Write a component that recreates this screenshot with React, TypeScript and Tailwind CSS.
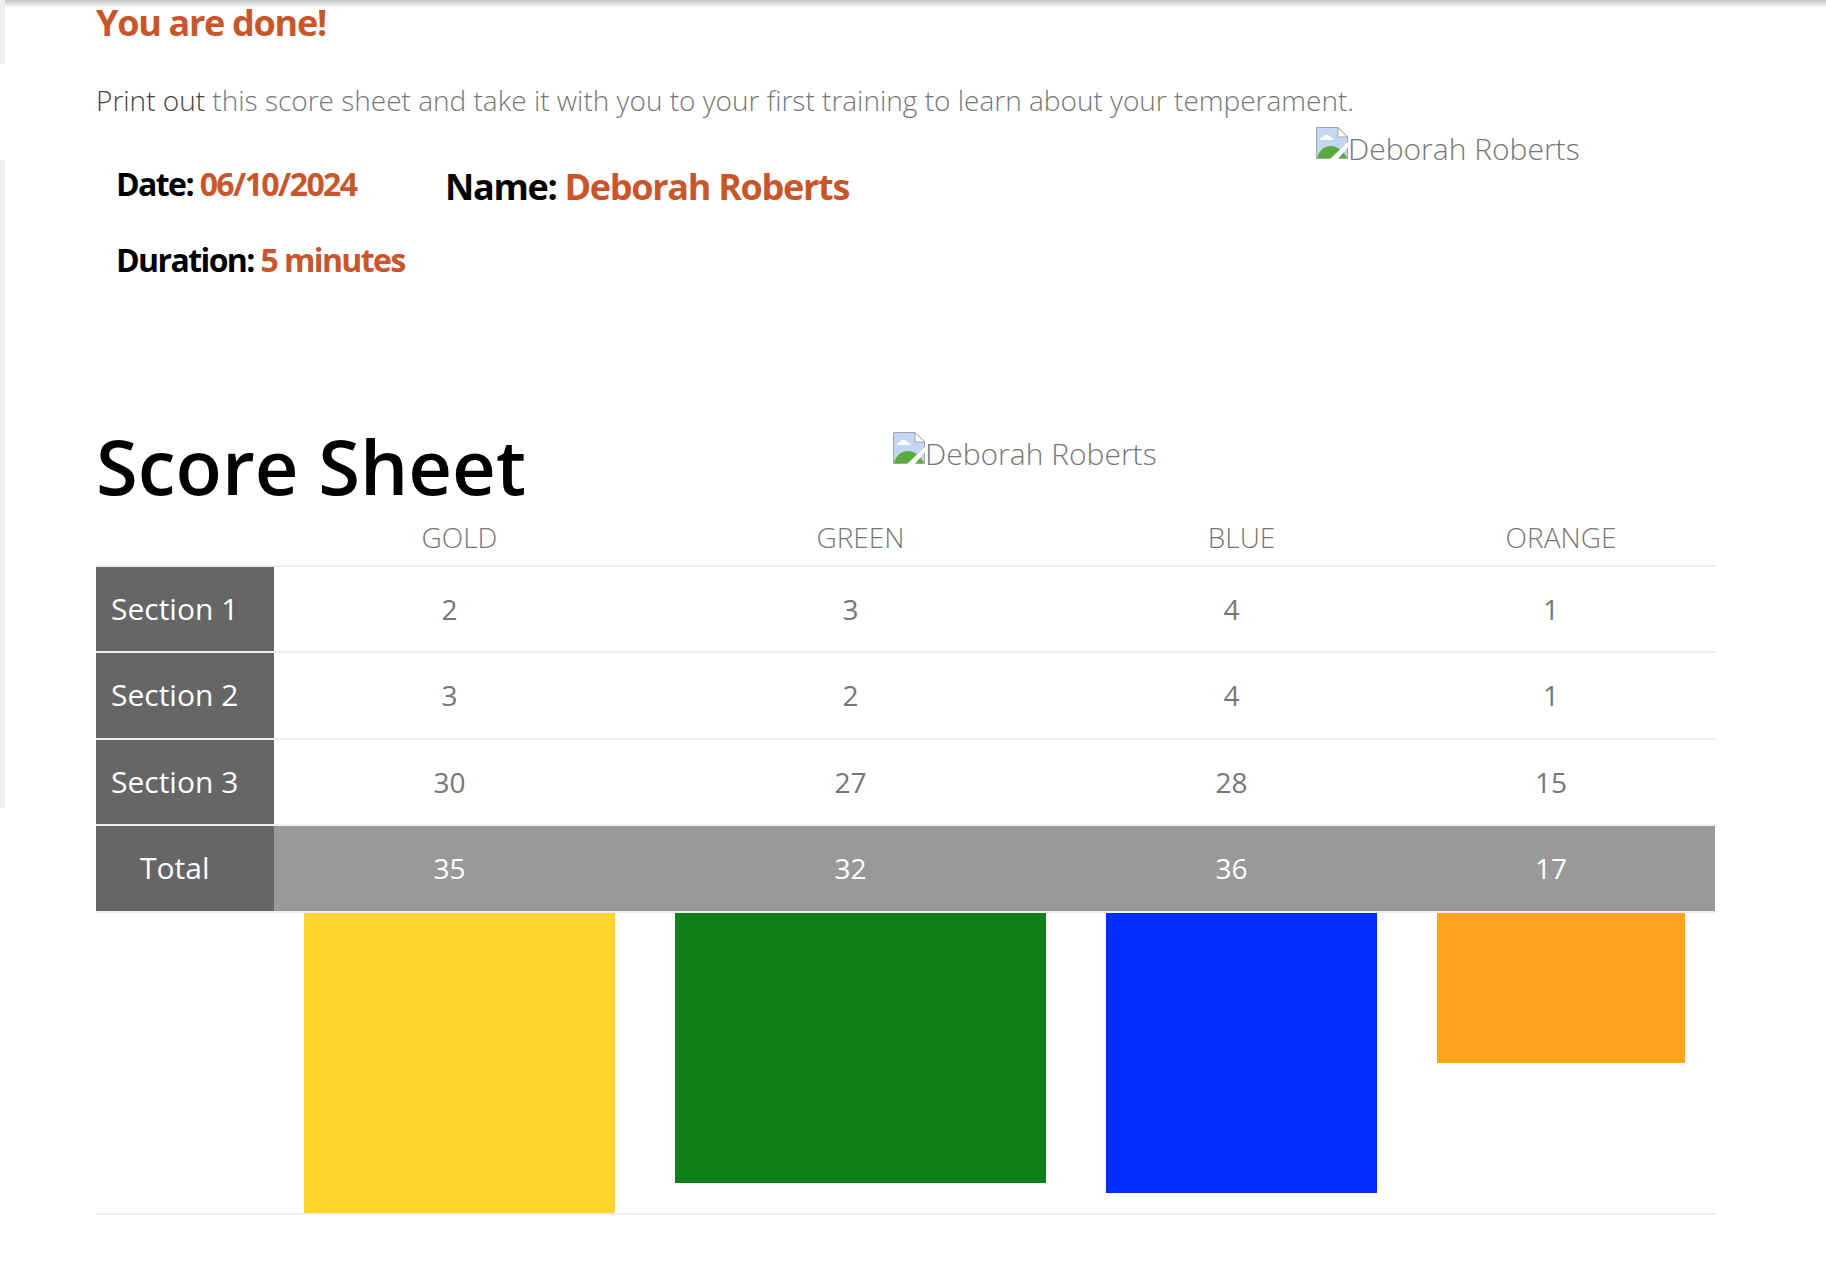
const font = { fontFamily: '"Open Sans", sans-serif' };

const columns = [
  { label: 'GOLD', bar: 'h-[300px] bg-[#ffd42c]', width: 'w-[371px]' },
  { label: 'GREEN', bar: 'h-[270px] bg-[#107f17]', width: 'w-[431px]' },
  { label: 'BLUE', bar: 'h-[280px] bg-[#002eff]', width: 'w-[331px]' },
  { label: 'ORANGE', bar: 'h-[150px] bg-[#ffa320]', width: 'w-[308px]' },
];

const rows = [
  { label: 'Section 1', height: 'h-[86px]', values: [2, 3, 4, 1] },
  { label: 'Section 2', height: 'h-[87px]', values: [3, 2, 4, 1] },
  { label: 'Section 3', height: 'h-[86px]', values: [30, 27, 28, 15] },
];

const totals = [35, 32, 36, 17];

function BrokenImage({ alt }: { alt: string }) {
  return (
    <span className="inline-flex items-baseline text-[30px] font-light leading-[32px] text-[#777]">
      <svg width="32" height="32" viewBox="0 0 32 32" className="shrink-0">
        <path d="M0.5 0.5H22L31.5 10V31.5H0.5Z" fill="#c3d6f2" stroke="#a3a3a3" />
        <path d="M22 0.5V10H31.5Z" fill="#fff" stroke="#a3a3a3" />
        <path d="M4 13c0-2 2-3 3-3 1-3 6-3 7 0 2 0 3 1 3 3Z" fill="#fff" />
        <path d="M1 31c2-8 8-12 14-12 6 0 13 5 16 12Z" fill="#5aab3e" />
        <path d="M14 32L32 15V20L22 32Z" fill="#fff" />
      </svg>
      <span className="translate-y-px">{alt}</span>
    </span>
  );
}

export default function App() {
  return (
    <div className="relative h-[1280px] bg-white px-[96px]" style={font}>
      <div className="absolute inset-x-0 top-0 h-[8px] bg-gradient-to-b from-[#c4c4c4] to-white" />
      <div className="absolute left-0 top-0 h-[64px] w-[5px] bg-[#eeeeee]" />
      <div className="absolute left-0 top-[160px] h-[648px] w-[5px] bg-[#eeeeee]" />

      <h1 className="pt-[2px] text-[36px] font-bold leading-[42px] tracking-[-1.3px] text-[#c9562b]">You are done!</h1>

      <p className="mt-[36px] text-[28px] font-light leading-[40px] text-[#777]">
        <span className="text-[#444]">Print out</span> this score sheet and take it with you to your first training to learn about your temperament.
      </p>

      <div className="flex">
        <div className="w-[1220px] pl-[20px] pt-[43px] font-bold text-black">
          <div className="flex items-start">
            <div className="w-[329px] text-[32px] leading-[42px] tracking-[-1.6px]">
              Date: <span className="text-[#c9562b]">06/10/2024</span>
            </div>
            <div className="pt-[3px] text-[36px] leading-[42px] tracking-[-1.3px]">
              Name: <span className="text-[#c9562b]">Deborah Roberts</span>
            </div>
          </div>
          <div className="mt-[31px] text-[32px] leading-[42px] tracking-[-1.6px]">
            Duration: <span className="text-[#c9562b]">5 minutes</span>
          </div>
        </div>
        <div className="pt-[7px]">
          <BrokenImage alt="Deborah Roberts" />
        </div>
      </div>

      <div className="mt-[145px] flex">
        <h2 className="w-[797px] text-[76px] font-semibold leading-[80px] text-black">Score Sheet</h2>
        <div className="pt-[6px]">
          <BrokenImage alt="Deborah Roberts" />
        </div>
      </div>

      <table className="mt-[3px] w-[1619px] table-fixed border-separate border-spacing-0 text-[28px] text-[#777]">
        <thead>
          <tr>
            <th className="w-[178px] border-b-2 border-[#eeeeee]" />
            {columns.map((c) => (
              <th key={c.label} className={`${c.width} h-[58px] border-b-2 border-[#eeeeee] text-center font-light`}>{c.label}</th>
            ))}
          </tr>
        </thead>
        <tbody>
          {rows.map((r) => (
            <tr key={r.label}>
              <td className={`${r.height} border-b-2 border-[#eeeeee] bg-[#666] pb-[2px] pl-[15px] text-[30px] text-white`}>{r.label}</td>
              {r.values.map((v, i) => (
                <td key={i} className="border-b-2 border-[#eeeeee] pb-[1px] pr-[20px] text-center">{v}</td>
              ))}
            </tr>
          ))}
          <tr>
            <td className="h-[87px] border-b-2 border-[#eeeeee] bg-[#666] pb-[2px] pl-[44px] text-[30px] text-white">Total</td>
            {totals.map((v, i) => (
              <td key={i} className="border-b-2 border-[#eeeeee] bg-[#999] pb-[1px] pr-[20px] text-center text-white">{v}</td>
            ))}
          </tr>
          <tr>
            <td className="border-b-2 border-[#eeeeee]" />
            {columns.map((c) => (
              <td key={c.label} className="border-b-2 border-[#eeeeee] px-[30px] align-top">
                <div className={c.bar} />
              </td>
            ))}
          </tr>
        </tbody>
      </table>
    </div>
  );
}
